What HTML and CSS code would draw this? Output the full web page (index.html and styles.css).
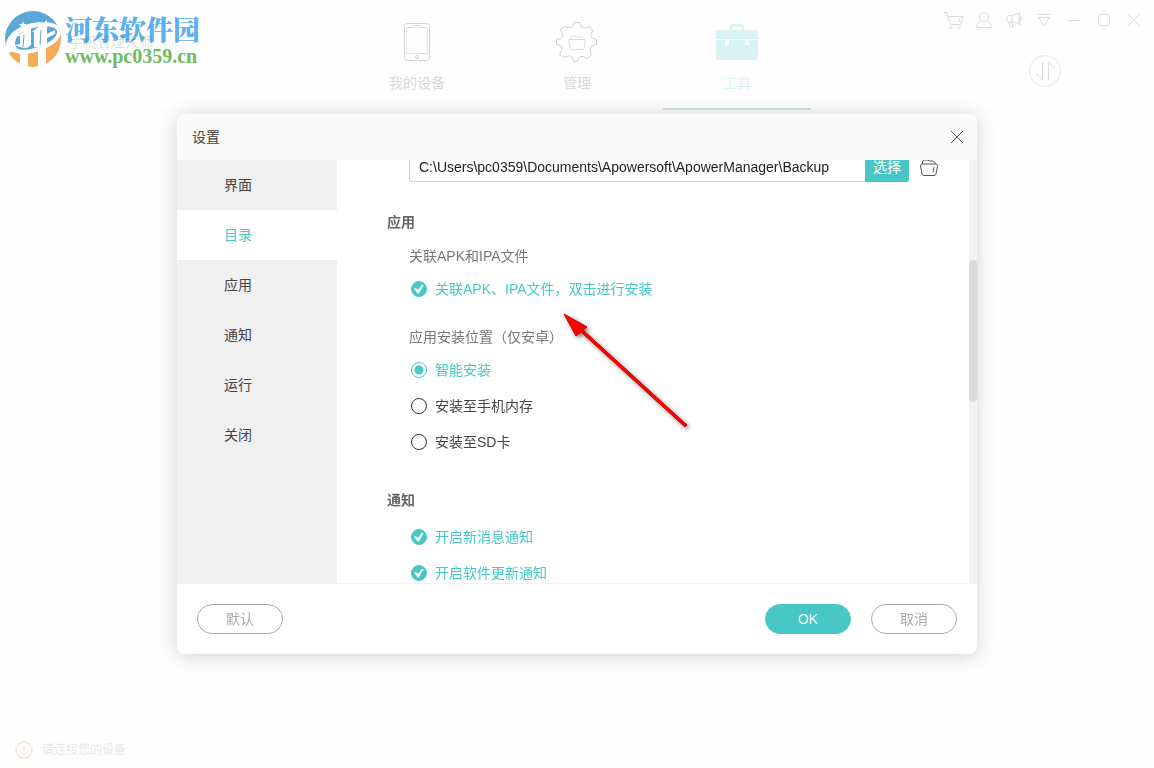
FILE: index.html
```
<!DOCTYPE html>
<html lang="zh-CN">
  <head>
    <meta charset="utf-8">
    <title>设置</title>
    <link rel="stylesheet" href="styles.css">
  </head>
  <body>
    <div class="app">
      <header class="topbar">
        <div class="brand">
          <svg class="brand-logo" width="58" height="58" viewBox="0 0 58 58">
            <defs>
              <clipPath id="disc"><circle cx="29" cy="29" r="28" /></clipPath>
            </defs>
            <g clip-path="url(#disc)">
              <path d="M0 0h58v26L0 36z" fill="#5ba8d8" />
              <path d="M0 40q32 8 58-17v35H0z" fill="#f5ab58" />
              <path d="M0 34l8 8-8 2zM16 40h8v18h-8zM34 38h8v20h-8z" fill="#fff" />
              <ellipse cx="30" cy="28" rx="26" ry="12" fill="#5ba8d8" stroke="#fff" stroke-width="4" transform="rotate(-17 30 28)" />
              <path d="M2 34C4 22 18 13 38 12 22 16 12 23 11 33q0 5 6 8C8 42 3 39 2 34z" fill="#fff" />
              <path d="M11 35l5-1V26l-3 0 14-10v19l-4 3q-7 0-12-3zM30 37V22l-2 0 15-12v14l8-4v4l-8 4v7q-6 3-13 2z" fill="#fff" />
              <path d="M20 25l-1 12M37 20l-1 15" stroke="#5ba8d8" />
            </g>
            <path d="M19 11l1 3 3 0-2 2 1 3-3-2-2 2 0-3-2-2 3 0z" fill="#fff" />
          </svg>
          <div class="brand-text">
            <span class="brand-name">河东软件园</span>
            <span class="brand-site">www.pc0359.cn</span>
            <span class="brand-app">手机管理大师</span>
          </div>
        </div>

        <nav class="tabs">
          <a href="#" class="tab">
            <svg width="42" height="42" viewBox="0 0 42 42" fill="none" stroke="#d4d4d4">
              <rect x="8.500" y="2.500" width="25" height="37" rx="3" />
              <rect x="10.500" y="6.500" width="21" height="26" stroke="#e4e4e4" />
              <path d="M18 4.500h6" />
              <circle cx="21" cy="36" r="1.500" />
            </svg>
            <span>我的设备</span>
          </a>
          <a href="#" class="tab">
            <svg width="42" height="42" viewBox="0 0 42 42" fill="none" stroke="#d0d0d0">
              <path d="M18.500 1.500h5l1.500 4q3 3 6 1l3-1 3 4-2 3q-1 4 2 5l3.500 1v5l-4 1q-3 2-2 5l1 4-4 4-4-2q-4-1-5 2l-1 3h-4l-1-4q-2-3-6-1l-3 1-4-3 2-4q1-4-2-5.500l-3-.5v-5l4-1q3-2 2-5l-2-4 4-3 4 1q5 1 5-3z" />
              <path d="M14.500 18v-2q0-1 2-1h3l1 1h5q1 0 1 2M12.500 18.500h17l-1.500 9q0 1-2 1H16q-2 0-2-1z" stroke="#dedede" />
            </svg>
            <span>管理</span>
          </a>
          <a href="#" class="tab tab-active">
            <svg width="42" height="42" viewBox="0 0 42 42">
              <path d="M14 9V6q0-3 3-3h8q3 0 3 3v3h-2V6.500q0-1-1-1h-8q-1 0-1 1V9z" fill="#d9f3f3" />
              <path d="M0 18v-6q0-3 3-3h36q3 0 3 3v6zM0 19h9v5h4v-5h16v5h4v-5h9v17q0 3-3 3H3q-3 0-3-3z" fill="#d9f3f3" />
            </svg>
            <span>工具</span>
          </a>
        </nav>

        <div class="tools">
          <div class="window-buttons">
            <button type="button" aria-label="购物车">
              <svg width="20" height="20" viewBox="0 0 20 20"><path d="M0 2.500h3l3.500 12h10L19 6.500H4.500M16 8l-1.500 4" /><circle cx="6.500" cy="17.500" r="1" /><circle cx="15.500" cy="17.500" r="1" /></svg>
            </button>
            <button type="button" aria-label="账户">
              <svg width="20" height="20" viewBox="0 0 20 20"><circle cx="10" cy="7" r="4.500" /><path d="M7 11q-4 1-4.500 5 0 1.500 1 1.500h13q1 0 1-1.500-.5-4-4.500-5" /></svg>
            </button>
            <button type="button" aria-label="公告">
              <svg width="20" height="20" viewBox="0 0 20 20"><path d="M8 5.500l7-2v10l-7-1.500H5q-2.500 0-2.500-3T5 5.500zM15 3.500l1-1V15l-1-1.500M8 5.500V12M16 7q2 0 2 1.500T16 10M5 12l1 5h3l-1.500-5" /></svg>
            </button>
            <button type="button" aria-label="菜单">
              <svg width="20" height="20" viewBox="0 0 20 20"><path d="M4 4.500h12M4.500 7.500h11L10 16z" /></svg>
            </button>
            <button type="button" aria-label="最小化">
              <svg width="20" height="20" viewBox="0 0 20 20"><path d="M4 10.500h12" /></svg>
            </button>
            <button type="button" aria-label="最大化">
              <svg width="20" height="20" viewBox="0 0 20 20"><rect x="4.500" y="4.500" width="11" height="11" rx="2" /></svg>
            </button>
            <button type="button" aria-label="关闭窗口">
              <svg width="20" height="20" viewBox="0 0 20 20"><path d="M4 4l12 12M16 4L4 16" /></svg>
            </button>
          </div>
          <button type="button" class="transfer" aria-label="传输">
            <svg width="32" height="32" viewBox="0 0 32 32"><path d="M13.500 7v18L7 18M19.500 25V7l6 6" /></svg>
          </button>
        </div>
      </header>

      <main class="workspace"></main>

      <footer class="statusbar">
        <svg width="18" height="18" viewBox="0 0 18 18" fill="none" stroke="#fde4dd" stroke-width="1.500">
          <circle cx="9" cy="9" r="8" />
          <path d="M9 4.500v6M9 12.500v2" stroke-width="2" />
        </svg>
        <span>请连接您的设备</span>
      </footer>
    </div>

    <div class="overlay">
      <section class="dialog" role="dialog" aria-labelledby="dialogTitle">
        <header class="dialog-header">
          <h1 id="dialogTitle">设置</h1>
          <button type="button" class="dialog-close" aria-label="关闭">
            <svg width="14" height="14" viewBox="0 0 14 14" stroke="#555"><path d="M1 1l12 12M13 1L1 13" /></svg>
          </button>
        </header>

        <div class="dialog-body">
          <nav class="menu">
            <a href="#">界面</a>
            <a href="#" class="selected">目录</a>
            <a href="#">应用</a>
            <a href="#">通知</a>
            <a href="#">运行</a>
            <a href="#">关闭</a>
          </nav>

          <form class="settings" id="settingsForm">
            <div class="path-row">
              <input type="text" class="path-input" aria-label="备份目录" value="C:\Users\pc0359\Documents\Apowersoft\ApowerManager\Backup">
              <button type="button" class="path-select">选择</button>
              <button type="button" class="path-open" aria-label="打开文件夹">
                <svg width="20" height="20" viewBox="0 0 20 20" fill="none" stroke="#555">
                  <path d="M3.500 7V5q0-2 2-2H9l1 1h4q1.500 0 2.500 3M1.500 9q0-2 2-2h13q2 0 2 2l-1.500 8q-.5 1.500-2 1.500H5Q3.500 18.500 3 17zM15 10l-1 5" />
                </svg>
              </button>
            </div>

            <h2>应用</h2>
            <div class="group">
              <p class="caption">关联APK和IPA文件</p>
              <label class="option"><input type="checkbox" checked><span>关联APK、IPA文件，双击进行安装</span></label>
              <p class="caption">应用安装位置（仅安卓）</p>
              <label class="option"><input type="radio" name="location" checked><span>智能安装</span></label>
              <label class="option"><input type="radio" name="location"><span>安装至手机内存</span></label>
              <label class="option"><input type="radio" name="location"><span>安装至SD卡</span></label>
            </div>

            <h2>通知</h2>
            <div class="group">
              <label class="option"><input type="checkbox" checked><span>开启新消息通知</span></label>
              <label class="option"><input type="checkbox" checked><span>开启软件更新通知</span></label>
            </div>
          </form>

          <div class="scrollbar"><div class="thumb"></div></div>
        </div>

        <footer class="dialog-footer">
          <button type="button" class="btn">默认</button>
          <button type="submit" form="settingsForm" class="btn btn-primary">OK</button>
          <button type="button" class="btn">取消</button>
        </footer>

        <svg class="pointer" width="140" height="130" viewBox="0 0 140 130">
          <path d="M7 7L30 20 26 23 130 118 128 120 24 25 19 29z" fill="#f00" stroke="#d00000" stroke-width="1" />
        </svg>
      </section>
    </div>
  </body>
</html>
```
FILE: styles.css
```
* {
  box-sizing: border-box;
}

body {
  margin: 0;
  background-color: #fefefe;
  color: #444;
  font-family: "Liberation Sans", "Noto Sans CJK SC", sans-serif;
  font-size: 14px;
  line-height: 20px;
}

a {
  color: inherit;
  text-decoration: none;
}

button {
  padding: 0;
  border: none;
  background: none;
  font: inherit;
  cursor: pointer;
}

svg {
  display: block;
}

/* Main window, faded behind the dialog */
.app {
  display: flex;
  flex-direction: column;
  min-height: 100vh;
}

.topbar {
  display: grid;
  grid-template-columns: 1fr auto 1fr;
  height: 111px;
  border-bottom: 1px solid #fafafa;
}

.brand {
  display: flex;
  align-items: flex-start;
  gap: 3px;
  padding: 10px 0 0 4px;
}

.brand-text {
  position: relative;
  display: flex;
  flex-direction: column;
  padding-top: 3px;
  white-space: nowrap;
}

.brand-name {
  color: #5cb0f0;
  font-family: "Noto Serif CJK SC", "Noto Sans CJK SC", serif;
  font-size: 27px;
  font-weight: 900;
  line-height: 32px;
}

.brand-site {
  color: #6fbb62;
  font-family: "Liberation Serif", serif;
  font-size: 20px;
  font-weight: bold;
  line-height: 22px;
}

/* App title showing through under the logo text */
.brand-app {
  position: absolute;
  top: 22px;
  left: 4px;
  color: rgba(0, 0, 0, 0.15);
}

.tabs {
  display: flex;
}

.tab {
  display: flex;
  flex-direction: column;
  align-items: center;
  gap: 10px;
  width: 148px;
  height: 110px;
  margin: 0 6px;
  padding-top: 21px;
  border-bottom: 2px solid transparent;
  color: #d8d8d8;
}

.tab-active {
  border-color: #cae7e5;
  color: #d9f3f3;
}

.tools {
  display: flex;
  flex-direction: column;
  align-items: flex-end;
  gap: 25px;
  padding-top: 10px;
}

.window-buttons {
  display: flex;
  padding-right: 5px;
}

.window-buttons button {
  display: flex;
  justify-content: center;
  width: 30px;
}

.tools svg {
  fill: none;
  stroke: #dcdcdc;
}

.transfer {
  width: 32px;
  height: 32px;
  margin-right: 93px;
  border: 1px solid #e6e6e6;
  border-radius: 50%;
}

.transfer svg {
  margin: -1px;
}

.workspace {
  flex: 1;
}

.statusbar {
  display: flex;
  align-items: center;
  gap: 9px;
  height: 37px;
  padding-left: 15px;
  border-top: 1px solid #fafafa;
  color: #e8e8e8;
  font-size: 12px;
}

/* Dialog */
.overlay {
  position: fixed;
  inset: 0;
  display: flex;
  align-items: center;
  justify-content: center;
}

.dialog {
  position: relative;
  display: flex;
  flex-direction: column;
  width: 800px;
  max-width: 100%;
  height: 540px;
  border-radius: 8px;
  background-color: #fff;
  box-shadow: 0 2px 20px rgba(0, 0, 0, 0.18);
}

.dialog-header {
  display: flex;
  align-items: center;
  justify-content: space-between;
  height: 46px;
  padding: 0 13px 0 15px;
  border-radius: 8px 8px 0 0;
  background-color: #fafafa;
}

.dialog-header h1 {
  margin: 0;
  font-size: 14px;
  font-weight: normal;
}

.dialog-body {
  display: flex;
  flex: 1;
  min-height: 0;
}

.menu {
  width: 160px;
  background-color: #f0f0f0;
}

.menu a {
  display: block;
  padding-left: 47px;
  line-height: 50px;
}

.menu .selected {
  background-color: #fff;
  color: #47c8c7;
}

.settings {
  flex: 1;
  padding: 0 30px 0 50px;
  overflow: hidden;
}

/* Scrolled partly under the header */
.path-row {
  display: flex;
  align-items: center;
  height: 30px;
  margin: -8px 0 0 22px;
}

.path-input {
  flex: 1;
  min-width: 0;
  height: 30px;
  padding: 0 9px;
  border: 1px solid #d4d4d4;
  border-right: none;
  border-radius: 3px 0 0 3px;
  color: #222;
  font: inherit;
}

.path-select {
  width: 44px;
  height: 30px;
  border-radius: 0 3px 3px 0;
  background-color: #47c8c7;
  color: #fff;
}

.path-open {
  margin-left: 10px;
}

.settings h2 {
  margin: 30px 0 9px;
  color: #666;
  font-size: 14px;
  font-weight: bold;
}

.group {
  padding-left: 22px;
}

.caption {
  margin: 20px 0 5px;
  color: #777;
}

.caption:first-child {
  margin-top: 14px;
}

.option {
  display: flex;
  align-items: center;
  gap: 8px;
  height: 36px;
  padding-left: 2px;
}

.option input {
  width: 16px;
  height: 16px;
  margin: 0;
  border: 1px solid #333;
  border-radius: 50%;
  appearance: none;
}

.option input:checked {
  border-color: #47c8c7;
}

.option input:checked + span {
  color: #47c8c7;
}

.option input[type="radio"]:checked {
  background: radial-gradient(circle, #47c8c7 4px, transparent 5px);
}

.option input[type="checkbox"]:checked {
  display: grid;
  place-items: center;
  background-color: #47c8c7;
}

.option input[type="checkbox"]:checked::before {
  content: "";
  width: 10px;
  height: 9px;
  background-color: #fff;
  clip-path: polygon(0 45%, 20% 38%, 42% 62%, 78% 0, 100% 0, 48% 100%, 36% 100%);
}

.scrollbar {
  width: 8px;
  padding-top: 100px;
  background-color: #f2f2f2;
}

.thumb {
  height: 142px;
  border-radius: 4px;
  background-color: #dcdcdc;
}

.dialog-footer {
  display: flex;
  align-items: center;
  gap: 20px;
  height: 71px;
  padding: 0 20px;
  border-top: 1px solid #f2f2f2;
}

.btn {
  width: 86px;
  height: 30px;
  border: 1px solid #aaa;
  border-radius: 15px;
  color: #aaa;
}

.btn:first-child {
  margin-right: auto;
}

.btn-primary {
  border-color: #47c8c7;
  background-color: #47c8c7;
  color: #fff;
}

/* Red arrow over the settings */
.pointer {
  position: absolute;
  top: 193px;
  left: 380px;
  filter: drop-shadow(2px 2px 2px rgba(0, 0, 0, 0.5));
  pointer-events: none;
}
```
